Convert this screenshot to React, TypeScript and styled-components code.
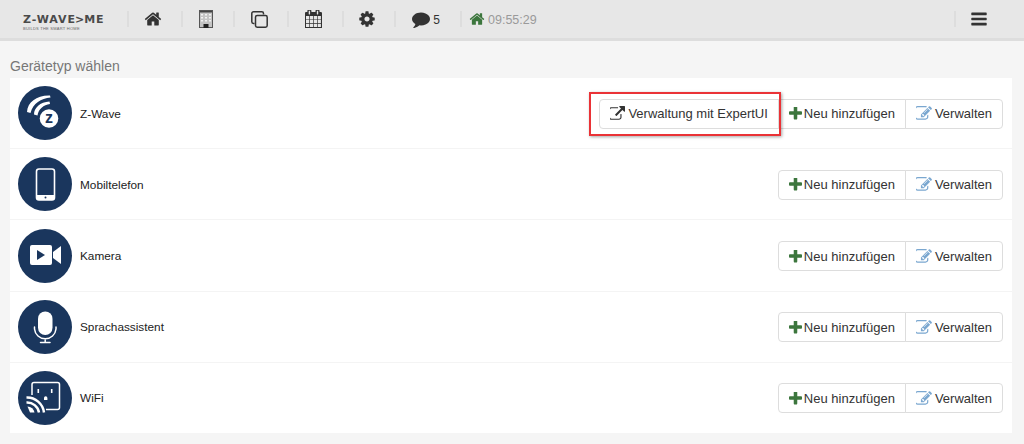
import React, { ReactNode } from "react";
import styled, { createGlobalStyle } from "styled-components";

const GlobalStyle = createGlobalStyle`
  html, body {
    margin: 0;
    padding: 0;
    background: #f5f5f5;
    font-family: "Liberation Sans", Arial, sans-serif;
    overflow: hidden;
  }
`;

const Page = styled.div`
  width: 1024px;
  height: 444px;
  display: flex;
  flex-direction: column;
`;

const Header = styled.header`
  height: 38px;
  flex: none;
  display: flex;
  align-items: center;
  background: #e7e7e7;
  border-bottom: 3px solid #dddddd;
`;

const Logo = styled.div`
  width: 127px;
  flex: none;
  display: flex;
  flex-direction: column;
  padding: 7px 0 0 23px;
  box-sizing: border-box;
  color: #4a4a4a;
`;

const LogoName = styled.span`
  font-family: "DejaVu Sans", sans-serif;
  font-size: 11px;
  line-height: 12px;
  font-weight: 700;
  letter-spacing: 0.95px;
  white-space: nowrap;
`;

const LogoArrow = styled.span`
  margin: 0 -1px;
`;

const LogoTag = styled.span`
  font-size: 4px;
  line-height: 5px;
  letter-spacing: 0.25px;
  color: #666;
  white-space: nowrap;
`;

const NavItem = styled.div<{ $w: number }>`
  width: ${(p) => p.$w}px;
  height: 16px;
  flex: none;
  display: flex;
  align-items: center;
  justify-content: center;
  gap: 3px;
  padding-right: 4px;
  border-left: 2px solid #dddddd;
  box-sizing: border-box;
  color: #333;
  font-size: 12px;
`;

const Count = styled.span`
  padding-top: 2px;
`;

const Clock = styled.div`
  height: 16px;
  display: flex;
  align-items: center;
  gap: 3px;
  padding-left: 7px;
  border-left: 2px solid #dddddd;
  font-size: 12.5px;
  color: #9a9a9a;
`;

const ClockText = styled.span`
  padding-top: 2px;
`;

const Spacer = styled.div`
  flex: 1;
`;

const MenuItem = styled(NavItem)`
  margin-right: 18px;
`;

const Main = styled.main`
  flex: 1;
  display: flex;
  flex-direction: column;
  padding: 0 12px 11px 10px;
`;

const Title = styled.h2`
  margin: 0;
  height: 37px;
  padding: 17px 0 0;
  box-sizing: border-box;
  font-size: 14px;
  line-height: 16px;
  font-weight: 400;
  color: #777;
`;

const Panel = styled.div`
  flex: 1;
  display: flex;
  flex-direction: column;
  background: #fff;
`;

const Row = styled.div`
  flex: 1;
  display: flex;
  align-items: center;
  padding: 0 9px 0 8px;
  border-bottom: 1px solid #f4f4f4;
  &:last-child {
    border-bottom: none;
  }
`;

const Badge = styled.div`
  width: 54px;
  height: 54px;
  flex: none;
  border-radius: 50%;
  background: #1a365d;
  svg {
    display: block;
  }
`;

const Name = styled.div`
  margin: 1px 0 0 8px;
  flex: 1;
  font-size: 11.8px;
  color: #222;
`;

const Group = styled.div`
  display: flex;
  height: 30px;
  margin-top: 1px;
`;

const Btn = styled.div<{ $pos?: "first" | "last"; $gap?: number }>`
  position: relative;
  display: flex;
  align-items: center;
  gap: ${(p) => p.$gap ?? 3}px;
  padding: 0 10px;
  background: #fff;
  border: 1px solid #dddddd;
  margin-left: -1px;
  font-size: 13px;
  color: #333;
  white-space: nowrap;
  border-radius: ${(p) =>
    p.$pos === "first" ? "4px 0 0 4px" : p.$pos === "last" ? "0 4px 4px 0" : "0"};
`;

const Highlight = styled.div`
  position: absolute;
  z-index: 1;
  left: -11px;
  right: -3px;
  top: -8px;
  bottom: -8px;
  border: 2px solid #ea3236;
  box-shadow: 1px 1px 3px rgba(0, 0, 0, 0.35);
  pointer-events: none;
`;

const Fa = styled.svg<{ $color?: string }>`
  display: block;
  flex: none;
  fill: ${(p) => p.$color || "#333"};
`;

const P = {
  home: "M1472 992v480q0 26-19 45t-45 19h-384v-384h-256v384h-384q-26 0-45-19t-19-45v-480q0-1 .5-3t.5-3l575-474 575 474q1 2 1 6zm223-69l-62 74q-8 9-21 11h-3q-13 0-21-7l-692-577-692 577q-12 8-24 7-13-2-21-11l-62-74q-8-10-7-23.5t11-21.5l719-599q32-26 76-26t76 26l244 204v-195q0-14 9-23t23-9h192q14 0 23 9t9 23v408l219 182q10 8 11 21.5t-7 23.5z",
  calendar: "M192 1664h288v-288h-288v288zm352 0h320v-288h-320v288zm-352-352h288v-320h-288v320zm352 0h320v-320h-320v320zm-352-384h288v-288h-288v288zm736 736h320v-288h-320v288zm-384-736h320v-288h-320v288zm768 736h288v-288h-288v288zm-384-352h320v-320h-320v320zm-352-864v-288q0-13-9.5-22.5t-22.5-9.5h-64q-13 0-22.5 9.5t-9.5 22.5v288q0 13 9.5 22.5t22.5 9.5h64q13 0 22.5-9.5t9.5-22.5zm736 864h288v-320h-288v320zm-384-384h320v-288h-320v288zm384 0h288v-288h-288v288zm32-480v-288q0-13-9.5-22.5t-22.5-9.5h-64q-13 0-22.5 9.5t-9.5 22.5v288q0 13 9.5 22.5t22.5 9.5h64q13 0 22.5-9.5t9.5-22.5zm384-64v1280q0 52-38 90t-90 38h-1408q-52 0-90-38t-38-90v-1280q0-52 38-90t90-38h128v-96q0-66 47-113t113-47h64q66 0 113 47t47 113v96h384v-96q0-66 47-113t113-47h64q66 0 113 47t47 113v96h128q52 0 90 38t38 90z",
  cog: "M1152 896q0-106-75-181t-181-75-181 75-75 181 75 181 181 75 181-75 75-181zm512-109v222q0 12-8 23t-20 13l-185 28q-19 54-39 91 35 50 107 138 10 12 10 25t-9 23q-27 37-99 108t-94 71q-12 0-26-9l-138-108q-44 23-91 38-16 136-29 186-7 28-36 28h-222q-14 0-24.5-8.5t-11.5-21.5l-28-184q-49-16-90-37l-141 107q-10 9-25 9-14 0-25-11-126-114-165-168-7-10-7-23 0-12 8-23 15-21 51-66.5t54-70.5q-27-50-41-99l-183-27q-13-2-21-12.5t-8-23.5v-222q0-12 8-23t19-13l186-28q14-46 39-92-40-57-107-138-10-12-10-24 0-10 9-23 26-36 98.5-107.5t94.5-71.5q13 0 26 10l138 107q44-23 91-38 16-136 29-186 7-28 36-28h222q14 0 24.5 8.5t11.5 21.5l28 184q49 16 90 37l142-107q9-9 24-9 13 0 25 10 129 119 165 170 7 8 7 22 0 12-8 23-15 21-51 66.5t-54 70.5q26 50 41 98l183 28q13 2 21 12.5t8 23.5z",
  comment: "M1792 896q0 174-120 321.5t-326 233-450 85.5q-70 0-145-8-198 175-460 242-49 14-114 22-17 2-30.5-9t-17.5-29v-1q-3-4-.5-12t2-10 4.5-9.5l6-9 7-8.5 8-9q7-8 31-34.5t34.5-38 31-39.5 32.5-51 27-59 26-76q-157-89-247.5-220t-90.5-281q0-130 71-248.5t191-204.5 286-136.5 348-50.5q244 0 450 85.5t326 233 120 321.5z",
  bars: "M1664 1344v128q0 26-19 45t-45 19h-1408q-26 0-45-19t-19-45v-128q0-26 19-45t45-19h1408q26 0 45 19t19 45zm0-512v128q0 26-19 45t-45 19h-1408q-26 0-45-19t-19-45v-128q0-26 19-45t45-19h1408q26 0 45 19t19 45zm0-512v128q0 26-19 45t-45 19h-1408q-26 0-45-19t-19-45v-128q0-26 19-45t45-19h1408q26 0 45 19t19 45z",
  plus: "M1600 736v192q0 40-28 68t-68 28h-416v416q0 40-28 68t-68 28h-192q-40 0-68-28t-28-68v-416h-416q-40 0-68-28t-28-68v-192q0-40 28-68t68-28h416v-416q0-40 28-68t68-28h192q40 0 68 28t28 68v416h416q40 0 68 28t28 68z",
  edit: "M888 1184l116-116-152-152-116 116v56h96v96h56zm440-720q-16-16-33 1l-350 350q-17 17-1 33t33-1l350-350q17-17 1-33zm80 594v190q0 119-84.5 203.5t-203.5 84.5h-832q-119 0-203.5-84.5t-84.5-203.5v-832q0-119 84.5-203.5t203.5-84.5h832q63 0 117 25 15 7 18 23 3 17-9 29l-49 49q-14 14-32 8-23-6-45-6h-832q-66 0-113 47t-47 113v832q0 66 47 113t113 47h832q66 0 113-47t47-113v-126q0-13 9-22l64-64q15-15 35-7t20 29zm-96-738l288 288-672 672h-288v-288zm444 132l-92 92-288-288 92-92q28-28 68-28t68 28l152 152q28 28 28 68t-28 68z",
  link: "M1408 928v320q0 119-84.5 203.5t-203.5 84.5h-832q-119 0-203.5-84.5t-84.5-203.5v-832q0-119 84.5-203.5t203.5-84.5h704q14 0 23 9t9 23v64q0 14-9 23t-23 9h-704q-66 0-113 47t-47 113v832q0 66 47 113t113 47h832q66 0 113-47t47-113v-320q0-14 9-23t23-9h64q14 0 23 9t9 23zm384-864v512q0 26-19 45t-45 19-45-19l-176-176-652 652q-10 10-23 10t-23-10l-114-114q-10-10-10-23t10-23l652-652-176-176q-19-19-19-45t19-45 45-19h512q26 0 45 19t19 45z",
};

const BuildingIcon = () => (
  <svg width="14" height="18" viewBox="0 0 14 18" style={{ display: "block" }}>
    <rect x="0.5" y="0.5" width="13" height="17" fill="#c4c4c4" stroke="#555" />
    <rect x="1" y="1" width="12" height="1.5" fill="#444" />
    <path d="M2 4h2v1.5H2zM6 4h2v1.5H6zM10 4h2v1.5h-2zM2 7h2v1.5H2zM6 7h2v1.5H6zM10 7h2v1.5h-2zM2 10h2v1.5H2zM6 10h2v1.5H6zM10 10h2v1.5h-2z" fill="#f2f2f2" />
    <rect x="4.5" y="14" width="5" height="4" fill="#222" />
  </svg>
);

const CloneIcon = () => (
  <svg width="17" height="17" viewBox="0 0 17 17" style={{ display: "block" }}>
    <path d="M3.5 12.5H2.5a1.7 1.7 0 0 1-1.7-1.7V2.5A1.7 1.7 0 0 1 2.5.8h8.3a1.7 1.7 0 0 1 1.7 1.7v1" fill="none" stroke="#333" strokeWidth="1.5" />
    <rect x="4.5" y="4.5" width="11.7" height="11.7" rx="1.7" fill="none" stroke="#333" strokeWidth="1.5" />
  </svg>
);

const ZWaveIcon = () => (
  <svg width="54" height="54" viewBox="0 0 54 54">
    <path d="M9 26 C9.5 16 19 9 32 9.5 L32.5 11.5 C23 12.5 15 17 12.5 27z" fill="#fff" />
    <path d="M16 28.5 C16 22 22 16 31.5 15.5 L32 18 C25.5 19 20.5 23 19.5 29.5z" fill="#fff" />
    <circle cx="31" cy="32.5" r="9.3" fill="#fff" />
    <text x="31" y="37.2" textAnchor="middle" fontSize="16" fontWeight="700" fontFamily="Liberation Sans" fill="#1a365d">z</text>
  </svg>
);

const PhoneIcon = () => (
  <svg width="54" height="54" viewBox="0 0 54 54">
    <rect x="18.5" y="12" width="18" height="31" rx="2.5" fill="none" stroke="#fff" strokeWidth="1.6" />
    <path d="M18.5 38h18v2.5a2.5 2.5 0 0 1-2.5 2.5h-13a2.5 2.5 0 0 1-2.5-2.5z" fill="#fff" />
    <circle cx="27.5" cy="40.5" r="1" fill="#1a365d" />
  </svg>
);

const CameraIcon = () => (
  <svg width="54" height="54" viewBox="0 0 54 54">
    <rect x="12" y="16" width="22" height="20" rx="2" fill="#fff" />
    <path d="M35 23 L43 17 V35 L35 29z" fill="#fff" />
    <path d="M19 21 L27 26 L19 31z" fill="#1a365d" />
  </svg>
);

const MicIcon = () => (
  <svg width="54" height="54" viewBox="0 0 54 54">
    <rect x="20" y="11.5" width="14.5" height="23.5" rx="7.2" fill="#fff" />
    <path d="M16.5 27 V29 A10.8 10.8 0 0 0 38 29 V27" fill="none" stroke="#fff" strokeWidth="1.5" strokeLinecap="round" />
    <path d="M27.2 40 V42.5 M22.5 42.6 H32" fill="none" stroke="#fff" strokeWidth="1.5" strokeLinecap="round" />
  </svg>
);

const WifiIcon = () => (
  <svg width="54" height="54" viewBox="0 0 54 54">
    <path d="M14 24 V13.5 a2 2 0 0 1 2-2 H39.5 a2 2 0 0 1 2 2 V36.5 a2 2 0 0 1-2 2 H28" fill="none" stroke="#fff" strokeWidth="1.5" />
    <path d="M20.3 18 v4 M33.7 18 v4" stroke="#fff" strokeWidth="1.6" fill="none" />
    <path d="M26 29 v-2 a1.7 1.7 0 0 1 3.4 0 v2z" fill="#fff" />
    <path d="M8.5 26.5 A17 17 0 0 1 26 41.5" fill="none" stroke="#fff" strokeWidth="2.5" />
    <path d="M8.5 31.5 A12 12 0 0 1 21 41.5" fill="none" stroke="#fff" strokeWidth="2.5" />
    <path d="M9.5 35.5 A7 7 0 0 1 16.5 41.5 H12z" fill="#fff" />
  </svg>
);

const devices: { name: string; icon: ReactNode; expert?: boolean }[] = [
  { name: "Z-Wave", icon: <ZWaveIcon />, expert: true },
  { name: "Mobiltelefon", icon: <PhoneIcon /> },
  { name: "Kamera", icon: <CameraIcon /> },
  { name: "Sprachassistent", icon: <MicIcon /> },
  { name: "WiFi", icon: <WifiIcon /> },
];

export default function App() {
  return (
    <Page>
      <GlobalStyle />
      <Header>
        <Logo>
          <LogoName>Z-WAVE<LogoArrow>&gt;</LogoArrow>ME</LogoName>
          <LogoTag>BUILDS THE SMART HOME</LogoTag>
        </Logo>
        <NavItem $w={54}><Fa width="18" height="18" viewBox="0 0 1792 1792"><path d={P.home} /></Fa></NavItem>
        <NavItem $w={52}><BuildingIcon /></NavItem>
        <NavItem $w={54}><CloneIcon /></NavItem>
        <NavItem $w={55}><Fa width="17" height="18" viewBox="100 64 1600 1700"><path d={P.calendar} /></Fa></NavItem>
        <NavItem $w={52}><Fa width="18" height="18" viewBox="0 0 1792 1792"><path d={P.cog} /></Fa></NavItem>
        <NavItem $w={66}>
          <Fa width="18" height="18" viewBox="0 0 1792 1792"><path d={P.comment} /></Fa>
          <Count>5</Count>
        </NavItem>
        <Clock>
          <Fa $color="#3c763d" width="16" height="16" viewBox="0 0 1792 1792"><path d={P.home} /></Fa>
          <ClockText>09:55:29</ClockText>
        </Clock>
        <Spacer />
        <MenuItem $w={52}><Fa width="18" height="18" viewBox="0 0 1792 1792"><path d={P.bars} /></Fa></MenuItem>
      </Header>
      <Main>
        <Title>Gerätetyp wählen</Title>
        <Panel>
          {devices.map((d) => (
            <Row key={d.name}>
              <Badge>{d.icon}</Badge>
              <Name>{d.name}</Name>
              <Group>
                {d.expert && (
                  <Btn $pos="first">
                    <Fa width="15" height="15" viewBox="128 0 1664 1664"><path d={P.link} /></Fa>
                    Verwaltung mit ExpertUI
                    <Highlight />
                  </Btn>
                )}
                <Btn $gap={2} $pos={d.expert ? undefined : "first"}>
                  <Fa $color="#3c763d" width="13" height="13" viewBox="192 192 1408 1408"><path d={P.plus} /></Fa>
                  Neu hinzufügen
                </Btn>
                <Btn $pos="last">
                  <Fa $color="#7aa7d0" width="16" height="15" viewBox="128 128 1664 1536"><path d={P.edit} /></Fa>
                  Verwalten
                </Btn>
              </Group>
            </Row>
          ))}
        </Panel>
      </Main>
    </Page>
  );
}
